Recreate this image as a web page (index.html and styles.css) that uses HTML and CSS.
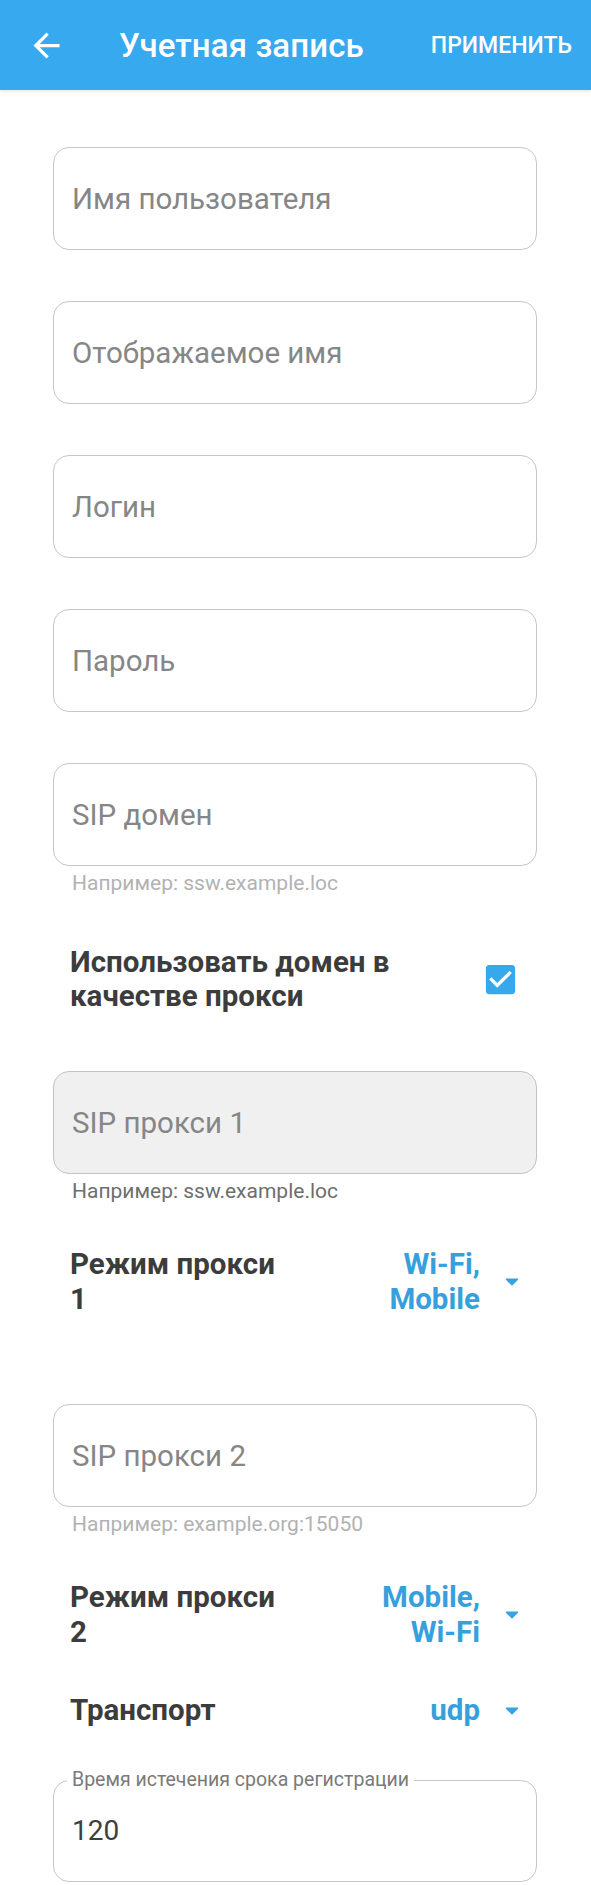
FILE: index.html
```html
<!DOCTYPE html>
<html lang="ru">
<head>
<meta charset="utf-8">
<title>Учетная запись</title>
<link rel="stylesheet" href="styles.css">
</head>
<body>
<header class="toolbar">
  <span class="back">
    <svg viewBox="0 0 24 24" width="39" height="39"><path fill="#fff" d="M20 11H7.830l5.59-5.59L12 4l-8 8 8 8 1.41-1.41L7.83 13H20v-2z"/></svg>
  </span>
  <h1 class="title">Учетная запись</h1>
  <span class="action">ПРИМЕНИТЬ</span>
</header>
<main class="content">
  <div class="field f-first"><span class="placeholder">Имя пользователя</span></div>
  <div class="field"><span class="placeholder">Отображаемое имя</span></div>
  <div class="field"><span class="placeholder">Логин</span></div>
  <div class="field"><span class="placeholder">Пароль</span></div>
  <div class="field"><span class="placeholder">SIP домен</span></div>
  <div class="hint">Например: ssw.example.loc</div>

  <div class="check-row">
    <span class="row-label check-label">Использовать домен в качестве прокси</span>
    <svg class="checkbox" viewBox="0 0 24 24" width="39" height="39"><path fill="#36a8ec" d="M19 3H5c-1.11 0-2 .9-2 2v14c0 1.1.89 2 2 2h14c1.11 0 2-.9 2-2V5c0-1.1-.89-2-2-2zm-9 14l-5-5 1.41-1.41L10 14.17l7.590-7.59L19 8l-9 9z"/></svg>
  </div>

  <div class="field disabled"><span class="placeholder">SIP прокси 1</span></div>
  <div class="hint dark">Например: ssw.example.loc</div>

  <div class="select-row sr-1">
    <span class="row-label sel-label">Режим прокси 1</span>
    <span class="sel-value">Wi-Fi, Mobile</span>
    <svg class="drop" viewBox="0 0 14 8" width="14" height="8"><path d="M1.5 1.2h11L7 6.8z" fill="#36a3e0" stroke="#36a3e0" stroke-width="1.6" stroke-linejoin="round"/></svg>
  </div>

  <div class="field f-proxy2"><span class="placeholder">SIP прокси 2</span></div>
  <div class="hint">Например: example.org:15050</div>

  <div class="select-row sr-2">
    <span class="row-label sel-label">Режим прокси 2</span>
    <span class="sel-value">Mobile, Wi-Fi</span>
    <svg class="drop" viewBox="0 0 14 8" width="14" height="8"><path d="M1.5 1.2h11L7 6.8z" fill="#36a3e0" stroke="#36a3e0" stroke-width="1.6" stroke-linejoin="round"/></svg>
  </div>

  <div class="select-row sr-3">
    <span class="row-label sel-label">Транспорт</span>
    <span class="sel-value">udp</span>
    <svg class="drop" viewBox="0 0 14 8" width="14" height="8"><path d="M1.5 1.2h11L7 6.8z" fill="#36a3e0" stroke="#36a3e0" stroke-width="1.6" stroke-linejoin="round"/></svg>
  </div>

  <fieldset class="outlined">
    <legend class="outlined-label">Время истечения срока регистрации</legend>
    <span class="outlined-value">120</span>
  </fieldset>
</main>
</body>
</html>
```
FILE: styles.css
```css
* { box-sizing: border-box; }
html, body {
  margin: 0;
  padding: 0;
  background: #ffffff;
  font-family: Roboto, "Noto Sans", "Liberation Sans", sans-serif;
}
.toolbar {
  height: 90px;
  background: #37a9ee;
  display: flex;
  align-items: center;
  padding: 0 19px 0 27px;
  box-shadow: 0 2px 3px rgba(0, 0, 0, 0.08);
  color: #fff;
}
.back {
  width: 39px;
  height: 39px;
  display: flex;
}
.title {
  margin: 0 0 0 53px;
  font-size: 33px;
  font-weight: 500;
  flex: 1;
  letter-spacing: 0.1px;
}
.action {
  font-size: 23px;
  font-weight: 500;
}
.content {
  padding: 0 54px 0 53px;
}
.field {
  height: 103px;
  border: 1.5px solid #c6c6c6;
  border-radius: 16px;
  display: flex;
  align-items: center;
  padding-left: 18px;
  margin-top: 51px;
}
.f-first { margin-top: 57px; }
.field.disabled {
  background: #f0f0f0;
  border-color: #c2c2c2;
  margin-top: 58px;
}
.placeholder {
  font-size: 29.5px;
  color: #868686;
}
.hint {
  font-size: 21px;
  line-height: 24px;
  color: #b2b2b2;
  padding-left: 19px;
  margin-top: 5px;
}
.hint.dark { color: #6e6e6e; }
.row-label {
  font-size: 29.5px;
  font-weight: 700;
  color: #3c3c3c;
}
.check-row {
  display: flex;
  align-items: center;
  justify-content: space-between;
  padding: 0 17px 0 17px;
  margin-top: 50px;
}
.check-label {
  max-width: 340px;
  line-height: 34px;
}
.checkbox { flex: none; }
.select-row {
  display: flex;
  align-items: center;
  padding: 0 18px 0 17px;
  line-height: 35px;
}
.sr-1 { margin-top: 44px; }
.sr-2 { margin-top: 44px; }
.sr-3 { margin-top: 43px; }
.sel-label { width: 215px; }
.sel-value {
  margin-left: auto;
  max-width: 120px;
  text-align: right;
  font-size: 29.5px;
  font-weight: 700;
  color: #37a0dc;
}
.drop {
  flex: none;
  margin-left: 25px;
}
.f-proxy2 { margin-top: 87px; }
.outlined {
  margin: 40px 0 0 0;
  border: 1.5px solid #c6c6c6;
  border-radius: 16px;
  height: 114px;
  padding: 0 18px;
  min-width: 0;
}
.outlined-label {
  font-size: 19.5px;
  color: #7a7a7a;
  padding: 0 5px;
  margin-left: -5px;
  line-height: 24px;
}
.outlined-value {
  display: block;
  font-size: 28px;
  color: #3e3e3e;
  margin-top: 22px;
}
```
